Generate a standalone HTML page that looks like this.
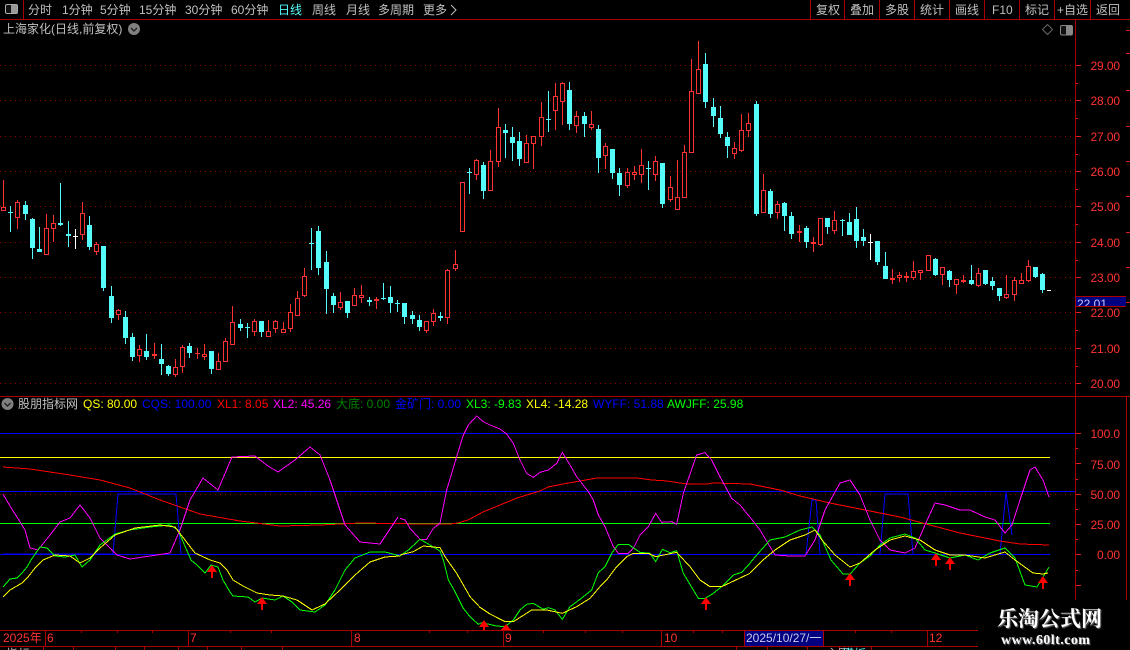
<!DOCTYPE html>
<html lang="zh">
<head>
<meta charset="utf-8">
<title>上海家化</title>
<style>
html,body{margin:0;padding:0;background:#000;}
#r{position:relative;width:1130px;height:650px;background:#000;overflow:hidden;font:12px/14px "Liberation Sans","WenQuanYi Zen Hei","Noto Sans CJK SC",sans-serif;color:#c0c0c0;}
#r svg{position:absolute;left:0;top:0;}
.t{position:absolute;white-space:nowrap;line-height:14px;height:14px;}
.p{position:absolute;white-space:nowrap;color:#ff3232;right:10px;line-height:14px;letter-spacing:-.1px;}
.a{position:absolute;white-space:nowrap;color:#ff3232;line-height:14px;top:631px;}
#wm{position:absolute;left:978px;top:600px;width:152px;height:50px;background:#000;}
#w1{position:absolute;left:19px;top:6px;font:bold 21px/24px "Noto Serif CJK SC","Noto Sans CJK SC",serif;color:#fff;letter-spacing:0;text-shadow:1px 1px 1px #777;white-space:nowrap;}
#w2{position:absolute;left:23px;top:33px;font:bold 14px/16px "Liberation Serif",serif;color:#fff;letter-spacing:.45px;text-shadow:1px 1px 1px #777;white-space:nowrap;}
</style>
</head>
<body>
<div id="r">
<svg width="1130" height="650" viewBox="0 0 1130 650" shape-rendering="crispEdges">
  <g id="grid" stroke="#900000" stroke-width="1" stroke-dasharray="1 4" fill="none">
    <path d="M0 65.5H1075M0 100.5H1075M0 136.5H1075M0 171.5H1075M0 206.5H1075M0 242.5H1075M0 277.5H1075M0 312.5H1075M0 348.5H1075M0 383.5H1075"/>
    <path d="M0 494.5H1075"/>
  </g>
  <g fill="none" stroke="#aa0000" stroke-width="1">
    <path d="M0 19.5H1130M23.5 0V19M810.5 0V19M844.5 0V19M879.5 0V19M914.5 0V19M949.5 0V19M984.5 0V19M1019.5 0V19M1054.5 0V19M1090.5 0V19"/>
    <path d="M0 396.5H1130M1075.5 19V600M1126.5 397V600"/>
    <path d="M0 630.5H978M0 646.5H978M45.5 630V646M188.5 630V646M351.5 630V646M503.5 630V646M661.5 630V646M744.5 630V646M823.5 630V646M927.5 630V646"/>
    <path d="M81.5 630V633M117.5 630V633M152.5 630V633M230.5 630V633M271.5 630V633M429.5 630V633M467.5 630V633M543.5 630V633M585.5 630V633M622.5 630V633M693.5 630V633M722.5 630V633M855.5 630V633M891.5 630V633"/>
    <path d="M43.5 647V650M73.5 647V650M115.5 647V650M144.5 647V650M178.5 647V650M207.5 647V650M241.5 647V650M282.5 647V650M736.5 647V650M767.5 647V650M807.5 647V650M839.5 647V650M871.5 647V650"/>
  </g>
  <g fill="none" stroke="#e02020" stroke-width="1">
    <path d="M1076 65.5h5M1076 100.5h5M1076 136.5h5M1076 171.5h5M1076 206.5h5M1076 242.5h5M1076 277.5h5M1076 312.5h5M1076 348.5h5M1076 383.5h5"/>
    <path d="M1076 83.5h2M1076 118.5h2M1076 154.5h2M1076 189.5h2M1076 224.5h2M1076 260.5h2M1076 330.5h2M1076 366.5h2"/>
    <path d="M1076 433.5h5M1076 463.5h5M1076 494.5h5M1076 524.5h5M1076 554.5h5M1076 448.5h2M1076 479.5h2M1076 509.5h2M1076 539.5h2M1076 570.5h2M1076 585.5h5"/>
    <path d="M1126 30.5h4M1126 53.5h4M1126 90.5h4M1126 126.5h4M1126 161.5h4M1126 196.5h4M1126 232.5h4M1126 267.5h4M1126 302.5h4"/>
  </g>

  <!-- indicator horizontals -->
  <g fill="none" stroke-width="1">
    <path d="M0 433.5H1075" stroke="#0000ff"/>
    <path d="M0 491.5H1075" stroke="#0000ff"/>
    <path d="M0 457.5H1050" stroke="#ffff00"/>
    <path d="M0 523.5H1050" stroke="#00ff00"/>
    <path d="M0 554.5H1050" stroke="#0000ff"/>
    <path d="M3 554H113L118 494H176L181 554M806 554L812 500H816L820 554M880 554L885 494H908L913 554M1000 554L1006 492L1012 535" stroke="#0000ff"/>
  </g>

  <!-- XL1 red -->
  <polyline fill="none" stroke="#ff0000" stroke-width="1" points="3,467 30,469 70,475 100,480 130,488 160,500 200,514 240,521 280,526 320,525 360,523 423,524 450,524 458,523 468,520 483,512 500,505 517,498 540,491 548,487 563,484 580,481 597,478 637,478 652,480 667,481 687,484 708,484 712,483 750,484 780,490 800,496 830,503 870,511 900,517 930,525 960,533 980,537 1000,541 1020,544 1049,545"/>
  <!-- XL2 magenta -->
  <polyline fill="none" stroke="#ff00ff" stroke-width="1" points="3,494 10,506 17,517 25,530 30,548 38,550 50,535 60,522 70,518 80,505 90,518 100,538 117,555 130,559 150,556 170,553 180,530 190,500 203,478 218,490 232,457 255,456 268,466 278,472 295,460 310,447 320,455 330,480 345,525 360,542 380,544 398,517"/>
  <g transform="translate(400 410) scale(.33333)">
    <polyline fill="none" stroke="#ff00ff" stroke-width="3" points="0,325 15,330 30,355 60,388 80,388 100,355 120,340 140,240 170,140 190,75 205,45 230,18 250,35 270,45 300,57 320,72 340,100 360,150 380,190 400,202 420,187 445,180 470,160 487,127 510,165 530,200 565,245 580,270 595,315 615,350 640,410 655,430 685,430 700,415 720,375 745,350 767,310 785,337 815,335 830,343 850,250 890,135 915,128 935,150 960,200 995,265 1020,285 1050,322"/>
  </g>
  <polyline fill="none" stroke="#ff00ff" stroke-width="1" points="750,517 760,530 775,555 790,556 805,556 815,540 825,510 840,483 850,480 860,495 870,520 880,540 890,550 905,553 915,548 925,525 935,503 945,505 960,510 970,510 985,517 995,520 1005,533 1012,525 1020,500 1030,470 1035,467 1043,480 1049,497"/>
  <!-- XL3 green -->
  <polyline fill="none" stroke="#00ff00" stroke-width="1" points="3,587 10,579 17,578 22,573 27,567 31,560 40,547 47,548 55,556 65,557 75,555 82,567 90,560 100,545 115,534 130,530 150,527 170,525 178,530 191,560 197,565 205,573 211,565 218,567 223,580 230,592 233,596 248,597 255,602 262,598 275,600 283,596 292,602 300,610 315,612 325,605 335,590 345,570 355,558 370,552 385,552 400,556"/>
  <g transform="translate(400 410) scale(.33333)">
    <polyline fill="none" stroke="#00ff00" stroke-width="3" points="0,438 25,420 60,388 90,405 120,423 130,450 145,510 165,545 190,595 210,620 235,643 245,638 290,648 315,650 340,630 360,600 380,583 400,580 430,598 445,593 465,600 487,628 510,590 540,568 575,540 595,488 615,470 635,430 655,403 685,403 720,427 750,430 767,455 787,418 810,428 830,422 850,490 895,565 915,565 940,550 965,530 1000,495 1025,487 1050,460"/>
  </g>
  <polyline fill="none" stroke="#00ff00" stroke-width="1" points="750,563 755,557 770,540 785,537 800,530 812,527 820,535 831,560 843,574 850,574 860,563 870,556 880,545 890,538 905,534 915,538 925,550 935,553 950,558 965,555 978,560 990,553 1005,548 1015,558 1025,585 1037,587 1043,577 1049,567"/>
  <!-- XL4 yellow -->
  <polyline fill="none" stroke="#ffff00" stroke-width="1" points="3,597 10,590 22,583 28,577 35,568 43,560 55,555 70,556 80,563 90,558 100,548 115,535 135,528 160,525 175,527 185,540 195,553 210,560 220,563 227,570 233,580 243,586 257,593 270,595 283,596 297,600 300,602 312,610 325,604 340,590 355,575 370,562 385,557 400,556"/>
  <g transform="translate(400 410) scale(.33333)">
    <polyline fill="none" stroke="#ffff00" stroke-width="3" points="0,435 40,425 70,408 120,413 135,440 170,490 210,560 240,592 270,612 315,635 340,635 395,600 440,600 487,610 530,590 570,565 600,530 620,510 650,470 680,440 700,430 745,430 767,440 830,427 870,470 900,510 930,530 965,530 1050,490"/>
  </g>
  <polyline fill="none" stroke="#ffff00" stroke-width="1" points="750,573 763,560 775,550 790,540 805,535 815,530 822,540 835,555 850,567 860,563 875,550 890,540 905,536 920,540 935,550 950,555 965,555 985,558 1005,552 1015,560 1033,573 1043,574 1048,573"/>

  <!-- arrows -->
  <g fill="#ff0000">
    <path d="M212 565l5 7h-4v6h-2v-6h-4z"/>
    <path d="M262 597l5 7h-4v6h-2v-6h-4z"/>
    <path d="M484 620l5 7h-4v3h-2v-3h-4z"/>
    <path d="M506 624l5 6h-10z"/>
    <path d="M706 597l5 7h-4v6h-2v-6h-4z"/>
    <path d="M850 573l5 7h-4v6h-2v-6h-4z"/>
    <path d="M936 553l5 7h-4v6h-2v-6h-4z"/>
    <path d="M950 557l5 7h-4v6h-2v-6h-4z"/>
    <path d="M1043 576l5 7h-4v6h-2v-6h-4z"/>
  </g>

  <g id="candles"></g>
  <rect x="1047" y="290" width="4" height="1" fill="#fff"/>

  <!-- price box -->
  <rect x="1076" y="297" width="50" height="9" fill="#000080"/>
  <path d="M1075 296.5H1126M1075 306.5H1126" stroke="#aa0000" fill="none"/>

  <!-- date highlight -->
  <rect x="745" y="631" width="78" height="15" fill="#000080"/>

  <!-- icons -->
  <g shape-rendering="auto">
    <rect x="5.5" y="4.5" width="12" height="9" rx="1.5" fill="#111" stroke="#aaa"/>
    <rect x="11" y="5" width="6" height="8" fill="#999"/>
    <rect x="1060.5" y="25.5" width="12" height="9.5" rx="1.5" fill="#111" stroke="#888"/>
    <rect x="1066" y="26" width="6" height="8.5" fill="#888"/>
    <path d="M1047.5 24.5l5 5-5 5-5-5z" fill="none" stroke="#666"/>
    <circle cx="134" cy="29" r="6" fill="#808080"/>
    <path d="M131 28l3 3 3-3" fill="none" stroke="#222" stroke-width="1.4"/>
    <circle cx="7.5" cy="404" r="6" fill="#808080"/>
    <path d="M4.5 403l3 3 3-3" fill="none" stroke="#222" stroke-width="1.4"/>
    <path d="M451 5l5 5-5 5" fill="none" stroke="#c0c0c0"/>
  </g>
</svg>

<span class="t" style="left:28px;top:3px">分时</span>
<span class="t" style="left:62px;top:3px">1分钟</span>
<span class="t" style="left:100px;top:3px">5分钟</span>
<span class="t" style="left:139px;top:3px">15分钟</span>
<span class="t" style="left:185px;top:3px">30分钟</span>
<span class="t" style="left:231px;top:3px">60分钟</span>
<span class="t" style="left:278px;top:3px;color:#54fcfc">日线</span>
<span class="t" style="left:312px;top:3px">周线</span>
<span class="t" style="left:346px;top:3px">月线</span>
<span class="t" style="left:378px;top:3px">多周期</span>
<span class="t" style="left:423px;top:3px">更多</span>

<span class="t" style="left:816px;top:3px">复权</span>
<span class="t" style="left:850px;top:3px">叠加</span>
<span class="t" style="left:885px;top:3px">多股</span>
<span class="t" style="left:920px;top:3px">统计</span>
<span class="t" style="left:955px;top:3px">画线</span>
<span class="t" style="left:992px;top:3px">F10</span>
<span class="t" style="left:1025px;top:3px">标记</span>
<span class="t" style="left:1057px;top:3px">+自选</span>
<span class="t" style="left:1096px;top:3px">返回</span>

<span class="t" style="left:3px;top:22px">上海家化(日线,前复权)</span>

<span class="p" style="top:59px">29.00</span>
<span class="p" style="top:94px">28.00</span>
<span class="p" style="top:130px">27.00</span>
<span class="p" style="top:165px">26.00</span>
<span class="p" style="top:200px">25.00</span>
<span class="p" style="top:236px">24.00</span>
<span class="p" style="top:271px">23.00</span>
<span class="p" style="top:306px">22.00</span>
<span class="p" style="top:342px">21.00</span>
<span class="p" style="top:377px">20.00</span>
<div style="position:absolute;left:1076px;top:297px;width:50px;height:9px;overflow:hidden"><span class="t" style="left:1px;top:0;color:#c8c8ff">22.01</span></div>

<span class="t" style="left:18px;top:397px">股朋指标网</span>
<span class="t" style="left:83px;top:397px;color:#ffff00">QS: 80.00</span>
<span class="t" style="left:142px;top:397px;color:#0000ff">CQS: 100.00</span>
<span class="t" style="left:217px;top:397px;color:#ff0000">XL1: 8.05</span>
<span class="t" style="left:273px;top:397px;color:#ff00ff">XL2: 45.26</span>
<span class="t" style="left:336px;top:397px;color:#008000">大底: 0.00</span>
<span class="t" style="left:395px;top:397px;color:#0000ff">金矿门: 0.00</span>
<span class="t" style="left:466px;top:397px;color:#00ff00">XL3: -9.83</span>
<span class="t" style="left:526px;top:397px;color:#ffff00">XL4: -14.28</span>
<span class="t" style="left:593px;top:397px;color:#0000ff">WYFF: 51.88</span>
<span class="t" style="left:667px;top:397px;color:#00ff00">AWJFF: 25.98</span>

<span class="p" style="top:427px">100.0</span>
<span class="p" style="top:458px">75.00</span>
<span class="p" style="top:488px">50.00</span>
<span class="p" style="top:518px">25.00</span>
<span class="p" style="top:548px">0.00</span>

<span class="a" style="left:3px">2025年</span>
<span class="a" style="left:47px">6</span>
<span class="a" style="left:190px">7</span>
<span class="a" style="left:354px">8</span>
<span class="a" style="left:505px">9</span>
<span class="a" style="left:664px">10</span>
<span class="a" style="left:746px;color:#c8c8e8">2025/10/27/一</span>
<span class="a" style="left:929px">12</span>

<span class="t" style="left:6px;top:647px">指标</span>
<span class="t" style="left:826px;top:647px">主图</span>
<span class="t" style="left:842px;top:647px;color:#54fcfc">模板</span>

<div id="wm"><div id="w1">乐淘公式网</div><div id="w2">www.60lt.com</div></div>
</div>
<script>
var G=[
[170,[[0,30,112,124,124],[1,108,126,128,186],[0,90,97,146,177],[1,93,105,132,150],[1,145,147,234,267],[1,171,237,246,246],[0,132,175,257,257],[0,135,160,179,218],[1,39,159,165,168],[1,153,192,198,231],[2,177,198,201,237],[0,96,130,197,210],[1,138,165,231,240],[0,216,222,246,255],[1,228,228,354,363],[1,348,378,444,459],[0,417,420,437,450],[1,423,441,504,522],[1,489,501,561,573],[0,525,537,558,576],[1,492,543,561,570],[0,519,552,558,567],[1,522,567,582,615],[1,585,588,612,618],[0,567,591,615,621],[0,525,531,591,609],[1,519,528,549,564],[0,534,549,552,567],[0,522,553,561,570],[1,543,543,597,612],[0,549,573,600,600],[0,504,514,576,576]]],
[210,[[0,288,336,405,405],[1,327,342,354,363],[1,339,353,356,384],[0,327,333,366,378],[1,333,333,366,381],[0,330,363,381,381],[0,330,333,357,369],[0,336,358,369,369],[0,282,306,357,366],[0,243,264,318,318],[0,174,198,258,261],[1,54,99,102,180],[1,48,63,174,195],[1,123,156,237,312],[1,249,258,285,309],[0,246,277,294,300],[1,273,273,309,324],[0,234,255,288,288],[0,225,255,264,279],[1,261,270,276,288],[0,261,267,273,297],[1,219,264,268,270],[1,228,261,279,309],[1,270,279,282,306],[1,279,279,321,342],[1,303,315,327,342],[1,315,330,351,363],[0,333,333,363,369],[0,297,309,336,348],[1,306,318,324,333],[0,177,180,324,342],[0,120,163,177,183]]],
[70,[[0,337,337,488,488],[1,294,306,309,372],[0,267,270,315,330],[1,276,285,363,387],[0,240,273,363,363],[0,114,171,276,291],[1,162,180,189,264],[1,171,201,219,273],[1,186,213,267,288],[0,195,219,279,279],[0,198,198,222,297],[0,96,141,201,228],[1,63,147,150,186],[0,39,78,123,180],[0,36,39,96,165],[1,36,60,162,180],[0,123,138,168,189],[1,126,138,162,201],[0,123,162,174,180],[1,165,177,264,309],[0,219,228,258,297],[1,237,237,309,327],[1,294,309,345,378],[0,294,306,348,354],[0,288,306,315,330],[0,237,285,315,339],[1,273,294,297,360],[0,258,273,315,333],[1,279,279,402,414]]],
[30,[[0,438,471,510,516],[0,390,501,540,540],[0,345,366,504,504],[0,87,183,369,369],[0,33,117,192,192],[1,69,102,216,234],[1,204,231,258,291],[1,228,264,312,324],[1,306,321,348,384],[0,336,354,372,387],[0,252,300,363,366],[0,249,279,303,321],[1,213,222,552,558],[0,432,480,549,549],[1,477,483,552,564],[0,513,522,549,567],[1,516,519,558,603],[1,546,558,612,627],[0,585,603,609,636],[1,588,594,636,654],[0,621,636,642,666],[0,564,564,645,648],[1,564,564,591,612],[0,543,570,603,612],[1,567,570,573,618],[1,549,576,615,615],[1,531,567,633,654],[1,597,621,633,648],[2,612,636,639,690]]],
[200,[[1,123,125,188,197],[1,156,198,237,237],[0,207,234,240,252],[0,216,226,235,246],[0,216,228,234,246],[0,183,213,234,240],[0,210,210,221,240],[0,165,165,213,213],[1,174,177,225,228],[0,201,201,225,255],[1,210,213,240,261],[0,237,237,255,282],[0,225,240,246,249],[1,195,240,252,255],[0,204,219,258,261],[1,210,210,252,255],[1,231,243,258,270],[1,264,264,288,303],[0,225,282,294,297],[0,231,240,285,303],[0,219,240,252,252],[0,180,198,243,246],[1,201,201,231,234],[1,219,222,270,279]]]
];
var C=['#ff3232','#54fcfc','#ffffff'],s='',i=0;
function R(x,y,w,h,f){return '<rect x="'+x+'" y="'+y+'" width="'+w+'" height="'+h+'" fill="'+f+'"/>';}
G.forEach(function(g){var b=g[0];g[1].forEach(function(c){
 var x=Math.floor(3.5+i*43/6),f=C[c[0]],
 h=Math.floor(b+c[1]/3),t=Math.floor(b+c[2]/3),bt=Math.floor(b+c[3]/3),l=Math.floor(b+c[4]/3);
 if(l<=h)l=h+1; if(bt<=t)bt=t+1;
 s+=R(x,h,1,l-h,f);
 s+=R(x-2,t,5,bt-t,f);
 if(c[0]==0&&bt-t>2)s+=R(x-1,t+1,3,bt-t-2,'#000');
 i++;
});});
document.getElementById('candles').innerHTML=s;
</script>
</body>
</html>
